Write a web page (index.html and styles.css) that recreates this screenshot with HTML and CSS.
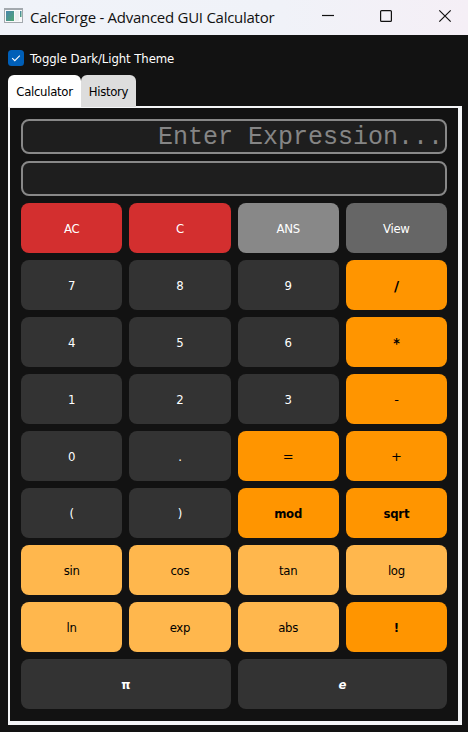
FILE: index.html
```html
<!DOCTYPE html>
<html lang="en">
<head>
<meta charset="utf-8">
<title>CalcForge - Advanced GUI Calculator</title>
<link rel="stylesheet" href="styles.css">
</head>
<body>
<header class="titlebar">
  <svg class="app-icon" width="20" height="16" viewBox="0 0 20 16">
    <defs><linearGradient id="g" x1="0" y1="0" x2="1" y2="1"><stop offset="0" stop-color="#4a86ad"/><stop offset="1" stop-color="#4fa572"/></linearGradient></defs>
    <rect x=".5" y=".5" width="18" height="14" fill="#f8f9fa" stroke="#a3a9ae"/>
    <path d="M0 1h19" stroke="#a3a9ae" stroke-width="2"/>
    <rect x="2" y="3" width="8" height="10" fill="url(#g)"/>
    <rect x="11" y="3" width="4" height="10" fill="#eceeef"/>
    <rect x="16" y="3" width="1.5" height="6" fill="url(#g)"/>
  </svg>
  <span class="title">CalcForge - Advanced GUI Calculator</span>
  <svg class="controls" width="132" height="14" viewBox="0 0 132 14" fill="none" stroke="#111" stroke-width="1.2">
    <path d="M0 6.5h12"/>
    <rect x="58.6" y="1.6" width="10.8" height="10.8" rx="1"/>
    <path d="M117.3 1.3l11.4 11.4M128.7 1.3l-11.4 11.4"/>
  </svg>
</header>
<main class="window">
  <label class="toggle">
    <svg class="check" width="16" height="16" viewBox="0 0 16 16"><rect width="16" height="16" rx="3.5" fill="#005fb8"/><path d="M4.2 8.2l2.6 2.5 5-5" fill="none" stroke="#fff" stroke-width="1.1"/></svg>
    <span class="toggle-text">Toggle Dark/Light Theme</span>
  </label>
  <nav class="tabs">
    <div class="tab active">Calculator</div>
    <div class="tab history">History</div>
  </nav>
  <section class="panel">
    <div class="field">Enter Expression...</div>
    <div class="field"></div>
    <div class="keys">
      <div class="key red">AC</div><div class="key red">C</div><div class="key ans">ANS</div><div class="key view">View</div>
      <div class="key">7</div><div class="key">8</div><div class="key">9</div><div class="key op slash">/</div>
      <div class="key">4</div><div class="key">5</div><div class="key">6</div><div class="key op star">*</div>
      <div class="key">1</div><div class="key">2</div><div class="key">3</div><div class="key op thin">-</div>
      <div class="key">0</div><div class="key">.</div><div class="key op thin">=</div><div class="key op thin">+</div>
      <div class="key">(</div><div class="key">)</div><div class="key op">mod</div><div class="key op">sqrt</div>
      <div class="key fn">sin</div><div class="key fn">cos</div><div class="key fn">tan</div><div class="key fn">log</div>
      <div class="key fn">ln</div><div class="key fn">exp</div><div class="key fn">abs</div><div class="key op">!</div>
      <div class="key wide">π</div><div class="key wide euler">e</div>
    </div>
  </section>
</main>
</body>
</html>
```
FILE: styles.css
```css
* { box-sizing: border-box; }
body {
  margin: 0;
  width: 468px;
  height: 732px;
  overflow: hidden;
  background: #121212;
  font: 13px/16px "DejaVu Sans Condensed", "DejaVu Sans", sans-serif;
  font-stretch: condensed;
  letter-spacing: -0.3px;
  color: #fff;
}
.titlebar {
  display: flex;
  align-items: center;
  height: 35px;
  padding: 0 14px 3px 4px;
  background: linear-gradient(90deg, #f0f3f9, #f0f2f8 60%, #f5eff6);
  color: #111;
}
.title {
  margin-left: 6px;
  padding-top: 1px;
  font: 15px/20px "Open Sans", sans-serif;
  letter-spacing: -0.27px;
  white-space: nowrap;
}
.controls { margin-left: auto; }
.window { padding: 15px 6px 0 8px; }
.toggle { display: flex; align-items: center; height: 16px; gap: 6px; }
.toggle-text { padding-top: 1px; letter-spacing: -0.08px; white-space: nowrap; }
.tabs { display: flex; height: 31px; margin-top: 9px; }
.tab {
  display: flex;
  align-items: center;
  justify-content: center;
  width: 55px;
  height: 32px;
  padding-top: 1px;
  border-radius: 6px 6px 0 0;
  background: #ddd;
  color: #000;
}
.tab.active { width: 73px; background: #fff; }
.panel {
  height: 619px;
  padding: 11px;
  border: solid #f4f5f7;
  border-width: 2px 4px 4px 2px;
}
.field {
  height: 35px;
  margin-bottom: 7px;
  padding-right: 2px;
  border: 2px solid #888;
  border-radius: 8px;
  background: #1e1e1e;
  color: #858585;
  font: 25px/33px "Liberation Mono", monospace;
  letter-spacing: 0;
  text-align: right;
}
.keys {
  display: grid;
  grid-template-columns: repeat(4, 1fr);
  grid-auto-rows: 50px;
  gap: 7px;
}
.key {
  display: flex;
  align-items: center;
  justify-content: center;
  padding-top: 2px;
  border-radius: 8px;
  background: #333;
}
.red { background: #d32f2f; }
.ans { background: #888; }
.view { background: #666; }
.op { background: #ff9500; color: #000; font-weight: bold; letter-spacing: -0.2px; }
.slash { font-size: 14px; font-family: "DejaVu Sans", sans-serif; font-stretch: normal; }
.star { font-size: 14px; }
.thin { font-family: "DejaVu Sans", sans-serif; font-weight: normal; font-stretch: normal; font-size: 13px; }
.fn { background: #ffb74d; color: #000; }
.wide { grid-column: span 2; font-weight: bold; }
.euler { font-size: 13px; font-style: italic; }
```
